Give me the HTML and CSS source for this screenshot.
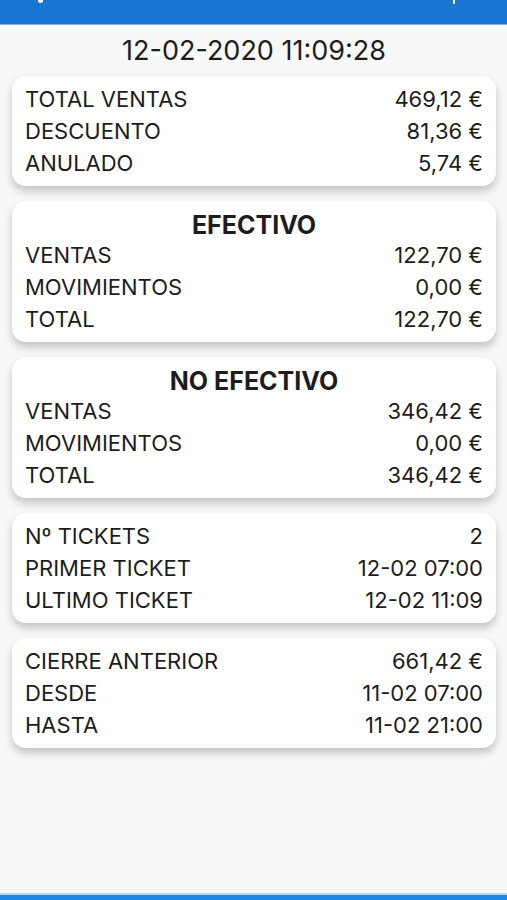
FILE: index.html
```html
<!DOCTYPE html>
<html lang="es">
<head>
  <meta charset="UTF-8" />
  <title>Cierre de caja</title>
  <link rel="stylesheet" href="styles.css">
</head>
<body>
  <header class="topbar">
    <span class="bar-icon bar-icon-left"></span>
    <span class="bar-icon bar-icon-right"></span>
  </header>

  <main class="content">
    <div class="date">12-02-2020 11:09:28</div>

    <section class="card">
      <div class="row"><span>TOTAL VENTAS</span><span>469,12 €</span></div>
      <div class="row"><span>DESCUENTO</span><span>81,36 €</span></div>
      <div class="row"><span>ANULADO</span><span>5,74 €</span></div>
    </section>

    <section class="card">
      <h3 class="card-title">EFECTIVO</h3>
      <div class="row"><span>VENTAS</span><span>122,70 €</span></div>
      <div class="row"><span>MOVIMIENTOS</span><span>0,00 €</span></div>
      <div class="row"><span>TOTAL</span><span>122,70 €</span></div>
    </section>

    <section class="card">
      <h3 class="card-title">NO EFECTIVO</h3>
      <div class="row"><span>VENTAS</span><span>346,42 €</span></div>
      <div class="row"><span>MOVIMIENTOS</span><span>0,00 €</span></div>
      <div class="row"><span>TOTAL</span><span>346,42 €</span></div>
    </section>

    <section class="card">
      <div class="row"><span>Nº TICKETS</span><span>2</span></div>
      <div class="row"><span>PRIMER TICKET</span><span>12-02 07:00</span></div>
      <div class="row"><span>ULTIMO TICKET</span><span>12-02 11:09</span></div>
    </section>

    <section class="card">
      <div class="row"><span>CIERRE ANTERIOR</span><span>661,42 €</span></div>
      <div class="row"><span>DESDE</span><span>11-02 07:00</span></div>
      <div class="row"><span>HASTA</span><span>11-02 21:00</span></div>
    </section>
  </main>

  <footer class="bottombar"></footer>
</body>
</html>
```

FILE: styles.css
```css
html, body {
  height: 100%;
}
body {
  margin: 0;
  font-family: Inter, "Noto Sans", sans-serif;
  color: #1d1d1d;
  background-color: #f8f8f9;
  display: flex;
  flex-direction: column;
}
.topbar {
  height: 24px;
  background-color: #1976d2;
  border-bottom: 1px solid #7fb6ec;
  position: relative;
}
.bar-icon {
  position: absolute;
  top: 0;
  width: 5px;
  height: 3px;
  background: #fff;
  border-radius: 0 0 3px 3px;
}
.bar-icon-left {
  left: 38px;
}
.bar-icon-right {
  left: 453px;
  width: 2px;
  height: 4px;
}
.content {
  flex: 1;
  padding: 10px 11px 0 12px;
}
.date {
  text-align: center;
  font-size: 27px;
  line-height: 32px;
  margin-bottom: 9px;
}
.card {
  background: #fff;
  border-radius: 14px;
  box-shadow: 0 5px 9px rgba(0,0,0,0.22);
  padding: 7px 13px;
  margin-bottom: 15px;
}
.card-title {
  margin: 3px 0 0;
  text-align: center;
  font-size: 25px;
  font-weight: bold;
  line-height: 28px;
}
.row {
  display: flex;
  justify-content: space-between;
  font-size: 22px;
  line-height: 32px;
}
.bottombar {
  height: 5px;
  background-color: #1e88e5;
  border-top: 2px solid #b6d8f5;
}
```
